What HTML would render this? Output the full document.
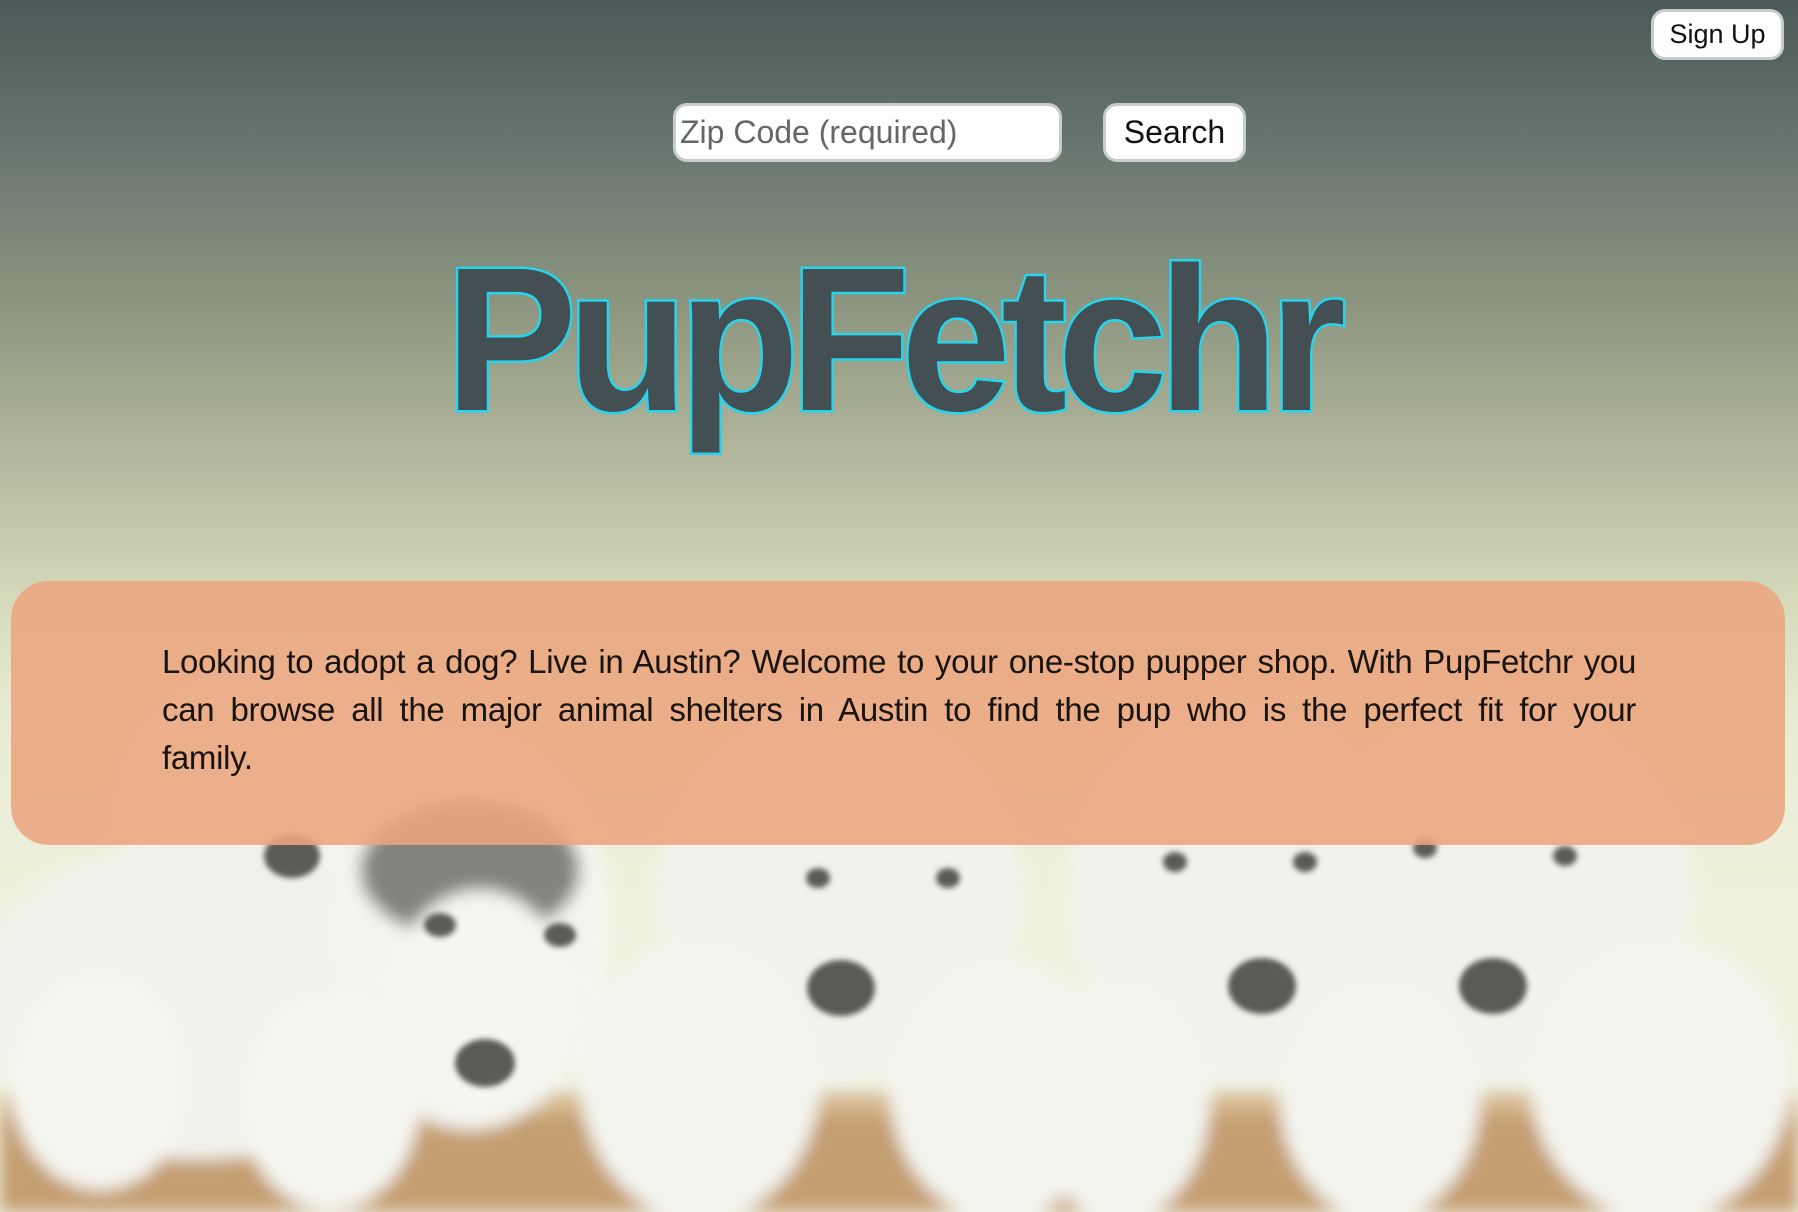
<!DOCTYPE html>
<html><head><meta charset="utf-8"><style>
html,body{margin:0;padding:0;width:1798px;height:1212px;overflow:hidden}
body{position:relative;font-family:"Liberation Sans",sans-serif;background:linear-gradient(180deg,#4b5959 0%,#6d7a72 14%,#8c957f 25%,#b3b89e 38%,#d7dbbc 50%,#e9ecd3 60%,#eff1df 75%,#eff1e0 100%)}
.bg{position:absolute;left:0;top:0;width:1798px;height:1212px}
.btn{position:absolute;background:#fff;border:3px solid #c9cccc;border-radius:14px;box-sizing:border-box;font-family:"Liberation Sans",sans-serif;color:#111}
.logo{position:absolute;left:445px;top:222px;width:900px;text-align:center;font-family:"Liberation Sans",sans-serif;font-weight:bold;font-size:205px;letter-spacing:-10px;color:#434f53;-webkit-text-stroke:5px #25d5ee;paint-order:stroke fill;transform:scaleX(0.965);transform-origin:left top;white-space:nowrap}
.panel{position:absolute;left:11px;top:581px;width:1774px;height:264px;border-radius:38px;background:rgba(234,165,126,0.88)}
.panel div.t{position:absolute;left:151px;top:57px;width:1474px;font-size:33px;line-height:48px;color:#1a1410;font-family:"Liberation Sans",sans-serif;letter-spacing:-0.3px}
.t span{display:block;white-space:nowrap;text-align:justify;text-align-last:justify}
.t span.l{text-align-last:left}
</style></head><body>
<svg class="bg" viewBox="0 0 1798 1212">
<defs><filter id="b"><feGaussianBlur stdDeviation="8"/></filter><filter id="c"><feGaussianBlur stdDeviation="3"/></filter></defs>
<g filter="url(#b)" opacity="0.95">
<rect x="0" y="1095" width="1798" height="117" fill="#c39a6c"/>
<rect x="0" y="1100" width="1798" height="14" fill="#d8b98e"/>
<ellipse cx="290" cy="800" rx="170" ry="150" fill="#f4f4ee"/>
<ellipse cx="200" cy="1000" rx="220" ry="160" fill="#f2f2ec"/>
<ellipse cx="470" cy="930" rx="140" ry="200" fill="#f5f5f0"/>
<ellipse cx="470" cy="870" rx="110" ry="70" fill="#7c7f7a"/>
<ellipse cx="480" cy="1000" rx="90" ry="110" fill="#f7f7f2"/>
<ellipse cx="840" cy="890" rx="180" ry="190" fill="#f3f3ee"/>
<ellipse cx="1240" cy="890" rx="170" ry="190" fill="#f3f3ee"/>
<ellipse cx="1500" cy="890" rx="190" ry="190" fill="#f3f3ee"/>
<ellipse cx="700" cy="1080" rx="120" ry="140" fill="#f4f4ef"/>
<ellipse cx="1000" cy="1090" rx="110" ry="130" fill="#f4f4ef"/>
<ellipse cx="1120" cy="1100" rx="90" ry="120" fill="#f4f4ef"/>
<ellipse cx="1380" cy="1100" rx="100" ry="120" fill="#f4f4ef"/>
<ellipse cx="1660" cy="1080" rx="130" ry="140" fill="#f4f4ef"/>
<ellipse cx="100" cy="1080" rx="90" ry="110" fill="#f6f6f1"/>
<ellipse cx="330" cy="1100" rx="90" ry="110" fill="#f6f6f1"/>
</g>
<g fill="#5b5a56" filter="url(#c)">
<ellipse cx="292" cy="856" rx="28" ry="22"/>
<ellipse cx="485" cy="1063" rx="30" ry="24"/>
<ellipse cx="841" cy="988" rx="34" ry="28"/>
<ellipse cx="1262" cy="986" rx="34" ry="28"/>
<ellipse cx="1493" cy="986" rx="34" ry="28"/>
<ellipse cx="440" cy="925" rx="16" ry="12"/><ellipse cx="560" cy="935" rx="16" ry="12"/>
<ellipse cx="818" cy="878" rx="12" ry="10"/><ellipse cx="948" cy="878" rx="12" ry="10"/>
<ellipse cx="1175" cy="862" rx="12" ry="10"/><ellipse cx="1305" cy="862" rx="12" ry="10"/>
<ellipse cx="1425" cy="848" rx="12" ry="10"/><ellipse cx="1565" cy="856" rx="12" ry="10"/>
</g>
</svg>
<div class="btn" style="left:1651px;top:9px;width:133px;height:51px;font-size:27px;line-height:45px;text-align:center">Sign Up</div>
<div class="btn" style="left:673px;top:103px;width:389px;height:59px;font-size:32px;line-height:53px;padding-left:4px;color:#666">Zip Code (required)</div>
<div class="btn" style="left:1103px;top:103px;width:143px;height:59px;font-size:32px;line-height:53px;text-align:center">Search</div>
<div class="logo">PupFetchr</div>
<div class="panel"><div class="t"><span>Looking to adopt a dog? Live in Austin? Welcome to your one-stop pupper shop. With PupFetchr you</span><span>can browse all the major animal shelters in Austin to find the pup who is the perfect fit for your</span><span class="l">family.</span></div></div>
</body></html>
